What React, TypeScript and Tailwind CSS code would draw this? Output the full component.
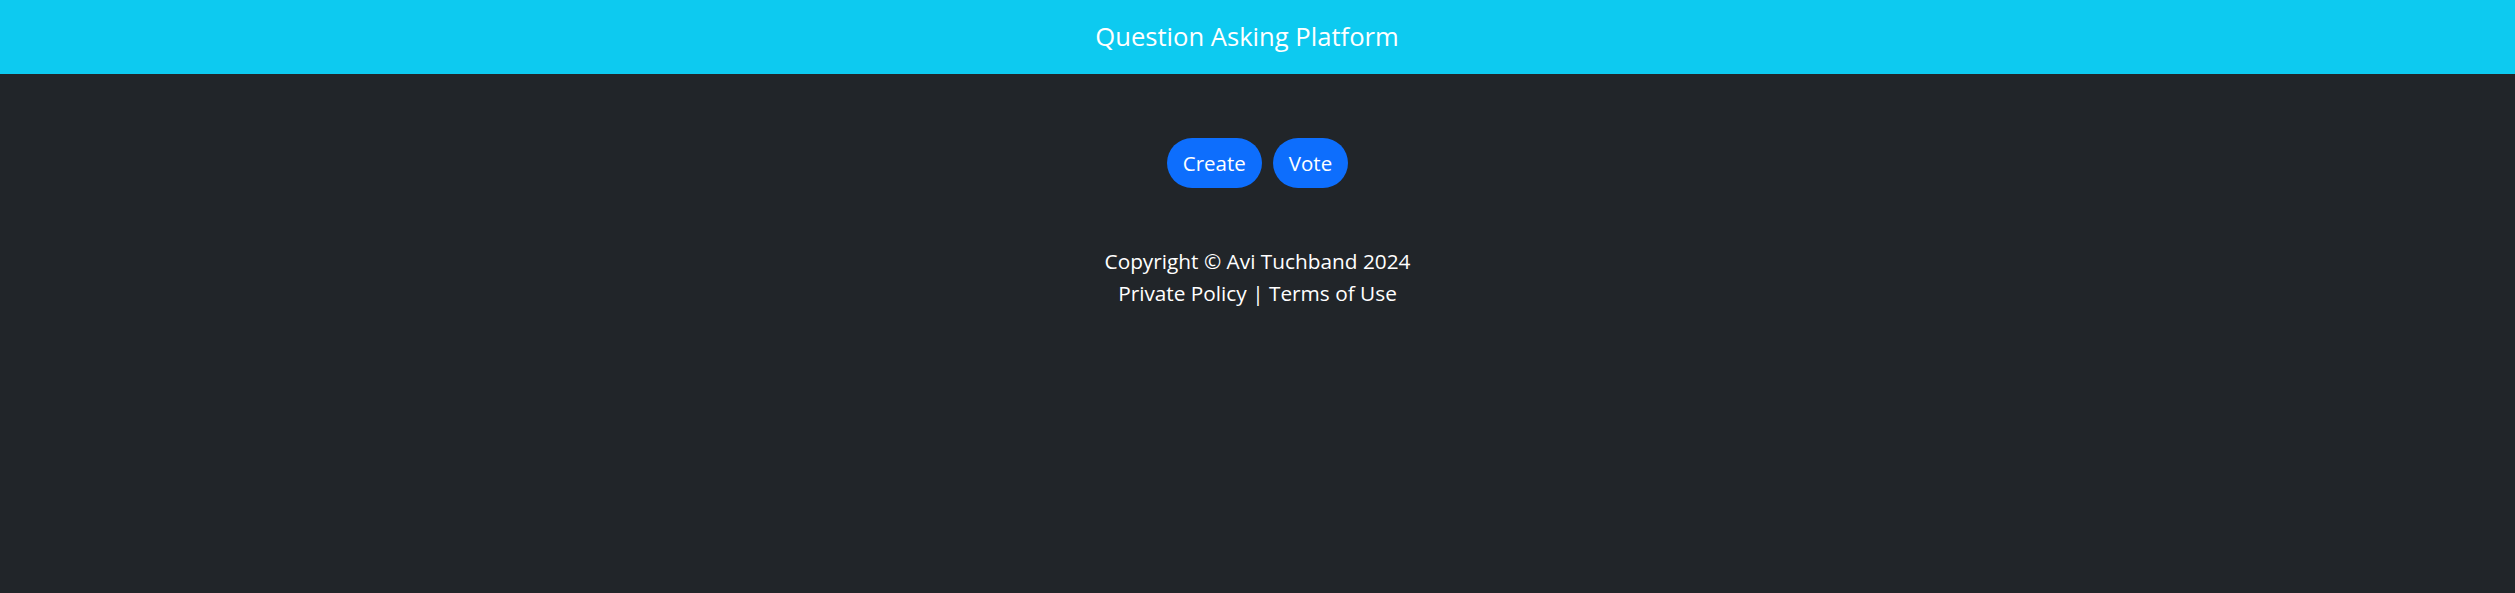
import React from "react";

export default function App() {
  return (
    <div className="min-h-[593px] bg-[#212529] text-white">
      <div className="h-[74px] bg-[#0dcaf0] flex items-center justify-center pr-[21px]">
        <span className="text-[25.6px] leading-[36px] text-white [font-family:'Open_Sans',sans-serif]">
          Question Asking Platform
        </span>
      </div>
      <div className="flex justify-center gap-[11px] mt-[64px] [font-family:'Open_Sans',sans-serif]">
        <button className="h-[50px] px-[16px] rounded-full bg-[#0d6efd] text-white text-[20.5px] leading-[32px]">
          Create
        </button>
        <button className="h-[50px] px-[16px] rounded-full bg-[#0d6efd] text-white text-[20.5px] leading-[32px]">
          Vote
        </button>
      </div>
      <div className="mt-[57px] text-center text-[20.8px] leading-[32px] [font-family:'Open_Sans',sans-serif]">
        <div>Copyright © Avi Tuchband 2024</div>
        <div>
          <a href="#" className="text-white">Private Policy</a> |{" "}
          <a href="#" className="text-white">Terms of Use</a>
        </div>
      </div>
    </div>
  );
}
